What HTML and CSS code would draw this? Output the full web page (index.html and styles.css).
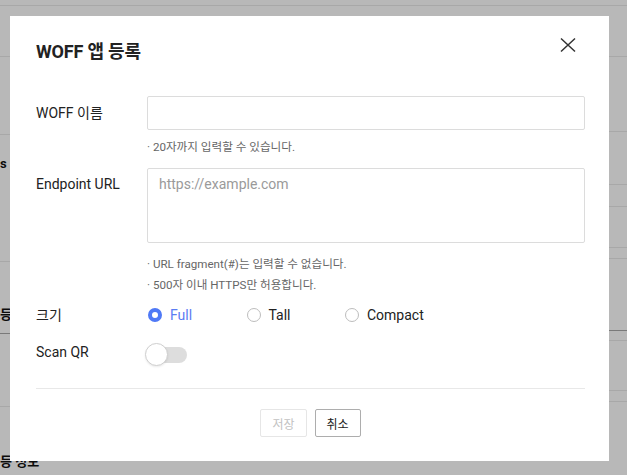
FILE: index.html
```html
<!DOCTYPE html>
<html lang="ko">
<head>
<meta charset="utf-8">
<title>WOFF 앱 등록</title>
<link rel="stylesheet" href="styles.css">
</head>
<body>
<div class="page">
  <div class="col col-left">
    <div class="seg s6"></div>
    <div class="seg s51"></div>
    <div class="seg s78"></div>
    <div class="seg s127"><span class="bgtext t1">s |</span></div>
    <div class="seg s72 dark"><span class="bgtext t2">등 정</span></div>
    <div class="seg s73"></div>
    <div class="seg last"><span class="bgtext t3">등 정보</span></div>
  </div>
  <div class="col col-right">
    <div class="seg s6"></div>
    <div class="seg r51"></div>
    <div class="seg r75"></div>
    <div class="seg r53"></div>
    <div class="seg r22"></div>
    <div class="seg r41"></div>
    <div class="seg r11"></div>
    <div class="seg r72 dark"></div>
    <div class="seg r10"></div>
    <div class="seg r50"></div>
    <div class="seg r11"></div>
  </div>
</div>
<div class="overlay"></div>

<div class="modal">
  <h2 class="modal-title">WOFF 앱 등록</h2>
  <button class="close" aria-label="닫기">
    <svg width="16" height="16" viewBox="0 0 16 16"><path d="M1 1.5 L15 14.5 M15 1.5 L1 14.5" stroke="#333" stroke-width="1.5" fill="none"/></svg>
  </button>

  <div class="form">
    <div class="row">
      <div class="label">WOFF 이름</div>
      <div class="field">
        <input class="input" type="text">
        <p class="hint">· 20자까지 입력할 수 있습니다.</p>
      </div>
    </div>
    <div class="row row-url">
      <div class="label">Endpoint URL</div>
      <div class="field">
        <textarea class="textarea" placeholder="https://example.com"></textarea>
        <p class="hint hint-first">· URL fragment(#)는 입력할 수 없습니다.</p>
        <p class="hint hint-next">· 500자 이내 HTTPS만 허용합니다.</p>
      </div>
    </div>
    <div class="row row-size">
      <div class="label">크기</div>
      <div class="radios">
        <label class="radio checked"><span class="dot"></span><span>Full</span></label>
        <label class="radio"><span class="dot"></span><span>Tall</span></label>
        <label class="radio"><span class="dot"></span><span>Compact</span></label>
      </div>
    </div>
    <div class="row row-qr">
      <div class="label">Scan QR</div>
      <div class="toggle"><span class="track"></span><span class="knob"></span></div>
    </div>
  </div>

  <div class="divider"></div>
  <div class="footer">
    <button class="btn disabled">저장</button>
    <button class="btn">취소</button>
  </div>
</div>
</body>
</html>
```

FILE: styles.css
```css
* { box-sizing: border-box; }
html, body { margin: 0; padding: 0; }
body {
  font-family: Roboto, "Noto Sans CJK KR", sans-serif;
  background: #fff;
  width: 627px;
  height: 475px;
  overflow: hidden;
}

/* background page */
.page { display: flex; width: 627px; }
.col { display: flex; flex-direction: column; width: 50%; }
.seg { border-bottom: 1px solid #e9e9e9; }
.seg.dark { border-bottom-color: #aaaaaa; }
.seg.last { border-bottom: none; height: 80px; }
.s6 { height: 6px; }
.s51 { height: 51px; }
.s78 { height: 78px; }
.s127 { height: 127px; }
.s72 { height: 72px; }
.s73 { height: 73px; }
.r51 { height: 51px; }
.r75 { height: 75px; }
.r53 { height: 53px; }
.r22 { height: 22px; }
.r41 { height: 41px; }
.r11 { height: 11px; }
.r72 { height: 72px; }
.r10 { height: 10px; }
.r50 { height: 50px; }
.bgtext {
  display: block;
  font-size: 13px;
  font-weight: 700;
  color: #111;
  white-space: nowrap;
  line-height: 18px;
}
.t1 { margin-top: 20px; }
.t2 { margin-top: 44px; }
.t3 { margin-top: 46px; }

.overlay {
  position: fixed;
  inset: 0;
  background: rgba(0, 0, 0, 0.28);
}

/* modal */
.modal {
  position: absolute;
  left: 10px;
  top: 16px;
  width: 599px;
  height: 445px;
  background: #fff;
  padding: 24px 24px 0 26px;
}
.modal-title {
  margin: 0;
  font-size: 18px;
  line-height: 24px;
  font-weight: 700;
  color: #222;
  letter-spacing: -0.2px;
}
.close {
  position: absolute;
  top: 21px;
  right: 33px;
  width: 16px;
  height: 16px;
  padding: 0;
  border: 0;
  background: none;
  display: block;
}
.close svg { display: block; }

.form { margin-top: 32px; }
.row { display: flex; align-items: flex-start; }
.label {
  width: 111px;
  flex: none;
  font-size: 14px;
  line-height: 18px;
  color: #222;
}
.row:first-child .label { padding-top: 8px; }
.field { width: 438px; }
.input {
  display: block;
  width: 100%;
  height: 34px;
  border: 1px solid #dcdcdc;
  border-radius: 2px;
  padding: 0 11px;
  font: inherit;
  font-size: 14px;
  outline: none;
}
.textarea {
  display: block;
  width: 100%;
  height: 75px;
  border: 1px solid #dcdcdc;
  border-radius: 2px;
  padding: 6px 11px;
  font-family: Roboto, "Noto Sans CJK KR", sans-serif;
  font-size: 14px;
  line-height: 18px;
  resize: none;
  outline: none;
}
.textarea::placeholder { color: #9a9a9a; }
.hint {
  margin: 9px 0 0;
  font-size: 11.6px;
  line-height: 16px;
  color: #666;
}
.hint-first { margin-top: 13px; }
.hint-next { margin-top: 5px; }

.row-url { margin-top: 13px; }
.row-url .label { padding-top: 7px; }

.row-size { margin-top: 12px; align-items: center; height: 20px; }
.radios { display: flex; padding-left: 1px; }
.radio {
  display: flex;
  align-items: center;
  gap: 8px;
  width: 98.5px;
  font-size: 14px;
  line-height: 18px;
  color: #222;
}
.dot {
  width: 14px;
  height: 14px;
  border-radius: 50%;
  border: 1px solid #bdbdbd;
  background: #fff;
  flex: none;
}
.radio.checked { color: #5b7cf3; }
.radio.checked .dot { border: 4px solid #4f79f6; }

.row-qr { margin-top: 18px; align-items: center; height: 24px; }
.row-qr .label { margin-top: -6px; }
.toggle {
  position: relative;
  width: 42px;
  height: 24px;
  margin-left: -2px;
}
.track {
  position: absolute;
  left: 2px;
  top: 4px;
  width: 40px;
  height: 16px;
  border-radius: 8px;
  background: #dddddd;
}
.knob {
  position: absolute;
  left: 0;
  top: 0;
  width: 23px;
  height: 23px;
  border-radius: 50%;
  background: #fff;
  border: 1px solid #cfcfcf;
  box-shadow: 0 1px 2px rgba(0,0,0,0.08);
}

.divider {
  margin-top: 21px;
  height: 1px;
  background: #e8e8e8;
}
.footer {
  display: flex;
  justify-content: center;
  gap: 8px;
  margin-top: 20px;
}
.btn {
  height: 28px;
  padding: 0 11px;
  border: 1px solid #adadad;
  border-radius: 2px;
  background: #fff;
  font-family: Roboto, "Noto Sans CJK KR", sans-serif;
  font-size: 12px;
  color: #222;
}
.btn.disabled { border-color: #e6e6e6; color: #c2c2c2; }
```
